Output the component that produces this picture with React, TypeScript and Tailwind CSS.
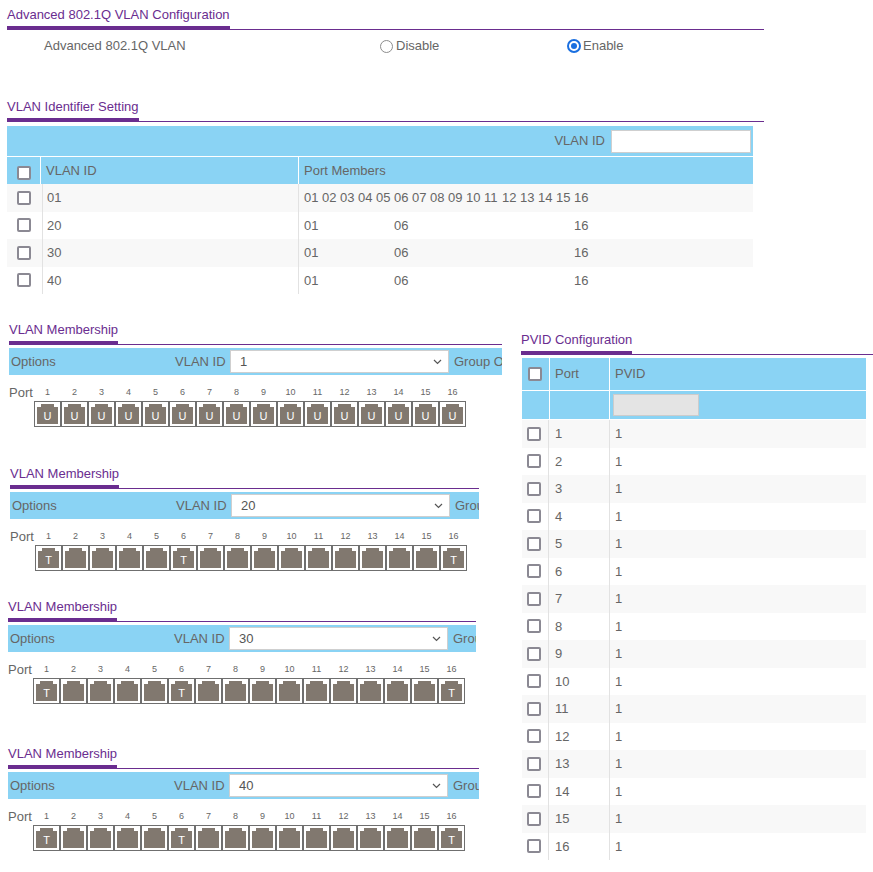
import React from "react";

const ports = Array.from({ length: 16 }, (_, i) => i + 1);
const pad = (n: number) => (n < 10 ? "0" + n : String(n));

function Title({ text }: { text: string }) {
  return (
    <div className="flex border-b border-[#6a2d8f]">
      <span className="-mb-px border-b-4 border-[#6a2d8f] pb-[3px] text-[13px] leading-4 text-[#6a2d8f]">
        {text}
      </span>
    </div>
  );
}

function Checkbox({ className = "" }: { className?: string }) {
  return (
    <span
      className={
        "block h-[14px] w-[14px] rounded-[2px] border-2 border-[#8b8993] bg-white " + className
      }
    />
  );
}

function Port({ mark }: { mark: string }) {
  return (
    <div className="relative h-[26px] w-[27px] border border-[#6f6f6f] bg-white p-[2px]">
      <svg width="21" height="20" viewBox="0 0 21 20" className="block">
        <polygon points="0,3 4,3 4,0 17,0 17,3 21,3 21,20 0,20" fill="#81786f" />
      </svg>
      {mark && (
        <span className="absolute inset-0 flex items-center justify-center pt-[4px] text-[11px] leading-none text-white">
          {mark}
        </span>
      )}
    </div>
  );
}

function Membership({
  vlan,
  marks,
  className,
}: {
  vlan: string;
  marks: string[];
  className: string;
}) {
  return (
    <div className={className}>
      <Title text="VLAN Membership" />
      <div className="mt-[3px] flex h-[27px] items-center overflow-hidden whitespace-nowrap bg-[#8ad3f4] text-[13px] text-[#666]">
        <span className="w-[166px] shrink-0 pl-[2px]">Options</span>
        <span className="w-[55px] shrink-0">VLAN ID</span>
        <div className="flex h-[23px] w-[219px] shrink-0 items-center justify-between border border-[#cfcfcf] bg-white pl-[9px] pr-[6px] text-[#555]">
          <span>{vlan}</span>
          <svg width="9" height="6" viewBox="0 0 9 6">
            <polyline points="1,1 4.5,4.5 8,1" fill="none" stroke="#555" strokeWidth="1.2" />
          </svg>
        </div>
        <span className="ml-[5px]">Group Operation</span>
      </div>
      <div className="mt-[10px] flex h-4 items-center text-[#666]">
        <span className="w-[25px] shrink-0 text-[13px]">Port</span>
        {ports.map((n) => (
          <span key={n} className="w-[27px] shrink-0 text-center text-[9px]">
            {n}
          </span>
        ))}
      </div>
      <div className="flex pl-[25px]">
        {ports.map((n) => (
          <Port key={n} mark={marks[n - 1]} />
        ))}
      </div>
    </div>
  );
}

const tagged = ports.map((n) => (n === 1 || n === 6 || n === 16 ? "T" : ""));
const untagged = ports.map(() => "U");

const vlanRows = [
  { id: "01", members: ports },
  { id: "20", members: [1, 6, 16] },
  { id: "30", members: [1, 6, 16] },
  { id: "40", members: [1, 6, 16] },
];

export default function App() {
  return (
    <div className="h-[872px] w-[873px] overflow-hidden bg-white font-['Liberation_Sans',Arial,sans-serif] text-[13px] text-[#666]">
      {/* top config */}
      <div className="ml-[7px] w-[757px] pt-[7px]">
        <Title text="Advanced 802.1Q VLAN Configuration" />
        <div className="mt-[7px] flex h-[18px] items-center pl-[37px]">
          <span className="w-[336px] shrink-0">Advanced 802.1Q VLAN</span>
          <div className="flex w-[187px] shrink-0 items-center">
            <span className="block h-[13px] w-[13px] rounded-full border-[1.5px] border-[#8d8d8d] bg-white" />
            <span className="ml-[3px]">Disable</span>
          </div>
          <div className="flex items-center">
            <span className="flex h-[14px] w-[14px] items-center justify-center rounded-full border-2 border-[#1a6fe0] bg-white">
              <span className="block h-[6px] w-[6px] rounded-full bg-[#1a6fe0]" />
            </span>
            <span className="ml-[2px]">Enable</span>
          </div>
        </div>

        <div className="mt-[44px]">
          <Title text="VLAN Identifier Setting" />
        </div>

        <div className="mt-[4px] w-[746px]">
          <div className="flex h-[30px] items-center justify-end bg-[#8ad3f4]">
            <span>VLAN ID</span>
            <div className="ml-[6px] mr-[2px] h-[23px] w-[140px] border border-[#cfcfcf] bg-white" />
          </div>
          <div className="mt-px flex h-[27px] bg-[#8ad3f4]">
            <div className="w-[33px] shrink-0 pl-[10px] pt-[9px]">
              <Checkbox />
            </div>
            <div className="flex w-[258px] shrink-0 items-center border-l border-white pl-[5px]">VLAN ID</div>
            <div className="flex flex-1 items-center border-l border-white pl-[5px]">Port Members</div>
          </div>
          {vlanRows.map((r, i) => (
            <div key={r.id} className={"flex h-[27.5px] " + (i % 2 === 0 ? "bg-[#f8f8f8]" : "bg-white")}>
              <div className="flex w-[35px] shrink-0 items-center pl-[10px]">
                <Checkbox />
              </div>
              <div className="flex w-[256px] shrink-0 items-center border-l border-[#e2e2e2] pl-[4px]">{r.id}</div>
              <div className="flex flex-1 items-center whitespace-nowrap border-l border-[#e2e2e2] pl-[5px]">
                {ports.map((n) => (
                  <span key={n} className="inline-block w-[18px] shrink-0">
                    {r.members.includes(n) ? pad(n) : ""}
                  </span>
                ))}
              </div>
            </div>
          ))}
        </div>
      </div>

      {/* lower area */}
      <div className="flex items-start">
        <div className="w-[521px] shrink-0 pt-[28px]">
          <Membership vlan="1" marks={untagged} className="ml-[9px] w-[493px]" />
          <Membership vlan="20" marks={tagged} className="ml-[10px] mt-[39px] w-[469px]" />
          <Membership vlan="30" marks={tagged} className="ml-[8px] mt-[28px] w-[468px]" />
          <Membership vlan="40" marks={tagged} className="ml-[8px] mt-[42px] w-[471px]" />
        </div>

        <div className="flex-1 pt-[38px]">
          <Title text="PVID Configuration" />
          <div className="ml-px mt-[3px] w-[344px]">
            <div className="flex h-[32px] bg-[#8ad3f4]">
              <div className="flex w-[27px] shrink-0 items-center pl-[6px]">
                <Checkbox />
              </div>
              <div className="flex w-[60px] shrink-0 items-center border-l border-white pl-[5px]">Port</div>
              <div className="flex flex-1 items-center border-l border-white pl-[5px]">PVID</div>
            </div>
            <div className="mt-px flex h-[28px] bg-[#8ad3f4]">
              <div className="w-[27px] shrink-0" />
              <div className="w-[60px] shrink-0 border-l border-white" />
              <div className="flex flex-1 items-center border-l border-white pl-[3px]">
                <div className="h-[22px] w-[86px] border border-[#cccccc] bg-[#e4e4e4]" />
              </div>
            </div>
            <div className="h-px" />
            {ports.map((n, i) => (
              <div key={n} className={"flex h-[27.5px] " + (i % 2 === 0 ? "bg-[#f8f8f8]" : "bg-white")}>
                <div className="flex w-[26px] shrink-0 items-center pl-[5px]">
                  <Checkbox />
                </div>
                <div className="flex w-[61px] shrink-0 items-center border-l border-[#e2e2e2] pl-[6px]">{n}</div>
                <div className="flex flex-1 items-center border-l border-[#e2e2e2] pl-[5px]">1</div>
              </div>
            ))}
          </div>
        </div>
      </div>
    </div>
  );
}
